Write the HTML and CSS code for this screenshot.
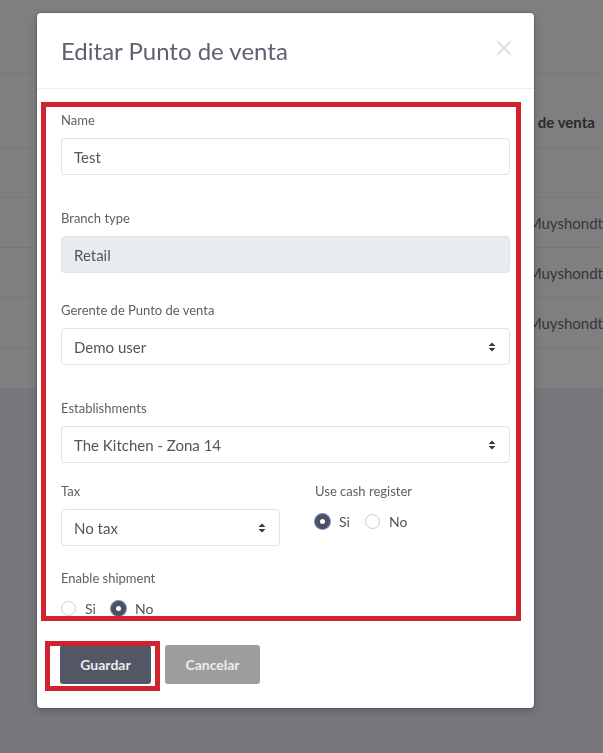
FILE: index.html
```html
<!DOCTYPE html>
<html lang="es">
<head>
    <meta charset="UTF-8">
    <meta name="viewport" content="width=device-width, initial-scale=1.0">
    <title>Editar Punto de venta</title>
    <link rel="stylesheet" href="styles.css">
</head>
<body>
    <!-- page behind the dialog -->
    <div class="card">
        <div class="card-top"></div>
        <div class="table-row table-head">
            <div class="cell cell-first"></div>
            <div class="cell cell-manager">Punto de venta</div>
        </div>
        <div class="table-row"></div>
        <div class="table-row">
            <div class="cell cell-first"></div>
            <div class="cell cell-manager cell-name">Muyshondt</div>
        </div>
        <div class="table-row">
            <div class="cell cell-first"></div>
            <div class="cell cell-manager cell-name">Muyshondt</div>
        </div>
        <div class="table-row">
            <div class="cell cell-first"></div>
            <div class="cell cell-manager cell-name">Muyshondt</div>
        </div>
        <div class="card-bottom"></div>
    </div>

    <div class="backdrop"></div>

    <div class="modal">
        <div class="modal-header">
            <h2>Editar Punto de venta</h2>
            <span class="close">
                <svg width="16" height="16" viewBox="0 0 16 16">
                    <path d="M1.5 1.5 L14.5 14.5 M14.5 1.5 L1.5 14.5" stroke="#d6d6d6" stroke-width="1.6" fill="none"/>
                </svg>
            </span>
        </div>

        <div class="modal-body">
            <div class="field">
                <label>Name</label>
                <input type="text" class="form-control" value="Test">
            </div>
            <div class="field field-short">
                <label>Branch type</label>
                <input type="text" class="form-control" value="Retail" disabled>
            </div>
            <div class="field">
                <label>Gerente de Punto de venta</label>
                <div class="form-control select">
                    <span>Demo user</span>
                    <svg width="8" height="10" viewBox="0 0 8 10"><path d="M0.5 4 L4 0.5 L7.5 4 Z M0.5 6 L4 9.5 L7.5 6 Z" fill="#3a3a3a"/></svg>
                </div>
            </div>
            <div class="field field-tight">
                <label>Establishments</label>
                <div class="form-control select">
                    <span>The Kitchen - Zona 14</span>
                    <svg width="8" height="10" viewBox="0 0 8 10"><path d="M0.5 4 L4 0.5 L7.5 4 Z M0.5 6 L4 9.5 L7.5 6 Z" fill="#3a3a3a"/></svg>
                </div>
            </div>
            <div class="field-row">
                <div class="field">
                    <label>Tax</label>
                    <div class="form-control select">
                        <span>No tax</span>
                        <svg width="8" height="10" viewBox="0 0 8 10"><path d="M0.5 4 L4 0.5 L7.5 4 Z M0.5 6 L4 9.5 L7.5 6 Z" fill="#3a3a3a"/></svg>
                    </div>
                </div>
                <div class="field">
                    <label>Use cash register</label>
                    <div class="radios">
                        <span class="radio checked"></span><span class="radio-text">Si</span>
                        <span class="radio"></span><span class="radio-text">No</span>
                    </div>
                </div>
            </div>
            <div class="field">
                <label>Enable shipment</label>
                <div class="radios">
                    <span class="radio"></span><span class="radio-text">Si</span>
                    <span class="radio checked"></span><span class="radio-text">No</span>
                </div>
            </div>
        </div>

        <div class="modal-footer">
            <button class="btn btn-save">Guardar</button>
            <button class="btn btn-cancel">Cancelar</button>
        </div>

        <!-- annotation boxes -->
        <div class="mark mark-form"></div>
        <div class="mark mark-save"></div>
    </div>
</body>
</html>
```

FILE: styles.css
```css
body {
    margin: 0;
    padding: 0;
    background-color: #ecedf6;
    font-family: Lato, "Open Sans", sans-serif;
    color: #555;
}

/* background page */
.card {
    background-color: white;
    height: 388px;
}
.card-top {
    height: 73px;
    border-bottom: 1px solid #eeeeee;
}
.table-row {
    display: flex;
    align-items: center;
    height: 49px;
    border-bottom: 1px solid #eeeeee;
}
.table-head {
    height: 73px;
    align-items: flex-end;
}
.cell {
    font-size: 15px;
    line-height: 18px;
    color: #6c6e78;
}
.cell-first {
    width: 494px;
}
.table-head .cell {
    font-weight: bold;
    color: #555;
    padding-bottom: 16px;
    white-space: nowrap;
}
.cell-name {
    padding-left: 41px;
    white-space: nowrap;
}

.backdrop {
    position: fixed;
    top: 0;
    left: 0;
    right: 0;
    bottom: 0;
    background-color: rgba(0, 0, 0, 0.5);
}

/* dialog */
.modal {
    position: absolute;
    top: 13px;
    left: 37px;
    width: 497px;
    background-color: white;
    border-radius: 4px;
    box-shadow: 0 0 0 1px rgba(0, 0, 0, 0.15), 0 3px 9px rgba(0, 0, 0, 0.2);
}
.modal-header {
    display: flex;
    justify-content: space-between;
    align-items: center;
    padding: 24px 22px 24px 24px;
    border-bottom: 1px solid #efefef;
}
.modal-header h2 {
    margin: 0;
    font-size: 24px;
    line-height: 27px;
    font-weight: normal;
    color: #5e6270;
}
.close {
    display: flex;
    margin-top: -5px;
}

.modal-body {
    height: 532px;
    overflow: hidden;
    padding: 22px 24px 0 24px;
    box-sizing: border-box;
}
.field {
    margin-bottom: 34px;
}
.field-short {
    margin-bottom: 28px;
}
.field-tight {
    margin-bottom: 19px;
}
.field label {
    display: block;
    font-size: 13px;
    line-height: 18px;
    margin-bottom: 9px;
    color: #5f6066;
}
.form-control {
    display: block;
    width: 100%;
    height: 37px;
    box-sizing: border-box;
    padding: 0 12px;
    border: 1px solid #dfe2e6;
    border-radius: 4px;
    background-color: white;
    font-family: Lato, "Open Sans", sans-serif;
    font-size: 15px;
    color: #555;
}
.form-control:disabled {
    background-color: #e9ecef;
    color: #555;
}
.select {
    display: flex;
    justify-content: space-between;
    align-items: center;
    padding-right: 13px;
}

.field-row {
    display: grid;
    grid-template-columns: 219px 1fr;
    column-gap: 35px;
}
.field-row .field {
    margin-bottom: 23px;
}

.radios {
    display: flex;
    align-items: center;
    height: 18px;
    padding-top: 3px;
}
.radio {
    width: 15px;
    height: 15px;
    box-sizing: border-box;
    border: 1px solid #c9ccd2;
    border-radius: 50%;
    position: relative;
}
.radio.checked {
    background-color: #4d505f;
    border-color: #4d505f;
    box-shadow: 0 0 0 1px #6d8fd0;
}
.radio.checked::after {
    content: "";
    position: absolute;
    top: 4px;
    left: 4px;
    width: 5px;
    height: 5px;
    border-radius: 50%;
    background-color: white;
}
.radio-text {
    font-size: 14px;
    color: #555;
    margin-left: 9px;
    margin-right: 15px;
}

.modal-footer {
    display: flex;
    gap: 14px;
    padding: 24px 23px;
}
.btn {
    height: 39px;
    border: none;
    border-radius: 3px;
    font-family: Lato, "Open Sans", sans-serif;
    font-size: 14px;
    font-weight: bold;
    color: #ececec;
}
.btn-save {
    width: 91px;
    background-color: #535664;
}
.btn-cancel {
    width: 95px;
    background-color: #9d9d9d;
}

.mark {
    position: absolute;
    border: 5px solid #d1232f;
    box-sizing: border-box;
}
.mark-form {
    top: 89px;
    left: 4px;
    width: 480px;
    height: 519px;
}
.mark-save {
    top: 628px;
    left: 8px;
    width: 115px;
    height: 50px;
}
```
